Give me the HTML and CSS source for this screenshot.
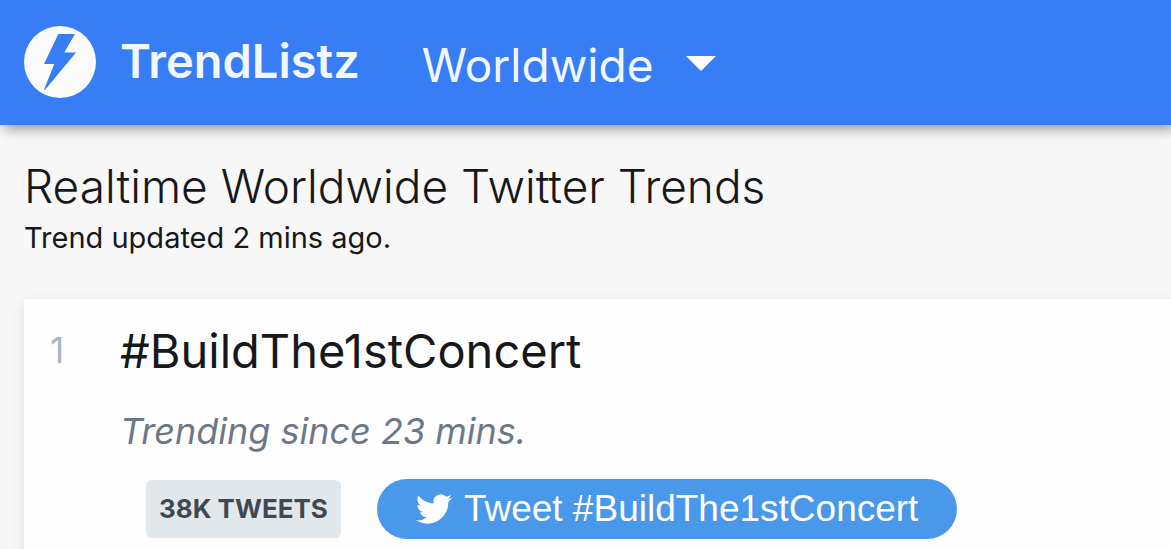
FILE: index.html
```html
<!DOCTYPE html>
<html lang="en">
<head>
    <meta charset="UTF-8">
    <meta name="viewport" content="width=device-width, initial-scale=1.0">
    <title>TrendListz</title>
    <link rel="stylesheet" href="styles.css">
</head>
<body>
    <header class="navbar">
        <a class="brand" href="#">
            <svg class="logo" viewBox="0 0 72 72" aria-hidden="true">
                <circle cx="36" cy="36" r="36" fill="#fafafa"/>
                <path d="M34.400 8H51L40.300 26.600H52L21.300 63.500Q20 65 20.300 63L30.300 38H20Z" fill="#377df6"/>
            </svg>
            <span>TrendListz</span>
        </a>
        <div class="location">
            <select class="location-select" aria-label="Location">
                <option>Worldwide</option>
            </select>
            <svg class="caret" viewBox="0 0 30 15" aria-hidden="true">
                <path d="M0 0H30L15 15Z" fill="#fff"/>
            </svg>
        </div>
    </header>
    <main class="content">
        <h1>Realtime Worldwide Twitter Trends</h1>
        <p class="updated">Trend updated 2 mins ago.</p>
        <ol class="trends">
            <li class="trend">
                <span class="rank">1</span>
                <div class="trend-body">
                    <h2>#BuildThe1stConcert</h2>
                    <p class="since">Trending since 23 mins.</p>
                    <div class="actions">
                        <span class="badge">38K TWEETS</span>
                        <a class="tweet" href="#">
                            <svg class="bird" viewBox="0 0 24 24" aria-hidden="true">
                                <path fill="#fff" d="M23.950 4.570a10 10 0 0 1-2.820.780 4.960 4.960 0 0 0 2.160-2.720c-.950.550-2 .950-3.130 1.180a4.920 4.920 0 0 0-8.380 4.480C7.690 8.090 4.070 6.130 1.640 3.160a4.900 4.900 0 0 0 1.520 6.570 4.900 4.900 0 0 1-2.230-.610v.060a4.920 4.920 0 0 0 3.950 4.830 5 5 0 0 1-2.210.080 4.940 4.940 0 0 0 4.600 3.420A9.870 9.870 0 0 1 0 19.540a14 14 0 0 0 7.550 2.210c9.050 0 14-7.500 14-13.980 0-.210 0-.420-.020-.630a9.940 9.940 0 0 0 2.460-2.550z"/>
                            </svg>
                            Tweet #BuildThe1stConcert
                        </a>
                    </div>
                </div>
            </li>
        </ol>
    </main>
</body>
</html>
```
FILE: styles.css
```css
* {
    box-sizing: border-box;
}
body {
    margin: 0;
    font-family: Inter, "Liberation Sans", sans-serif;
    background: #f7f7f7;
    color: #17181a;
}
h1, h2, p, ol {
    margin: 0;
    padding: 0;
}
.navbar {
    display: flex;
    align-items: center;
    gap: 62px;
    height: 125px;
    padding: 0 24px 2px;
    background: #377df6;
    box-shadow: 4px 4px 12px rgba(0, 0, 0, 0.4);
}
.brand {
    display: flex;
    align-items: center;
    gap: 24px;
    color: #f2f7ff;
    font-size: 47px;
    font-weight: 600;
    line-height: 72px;
    text-decoration: none;
}
.brand span {
    padding-bottom: 2px;
}
.logo {
    width: 72px;
    height: 72px;
}
.location {
    display: flex;
    align-items: center;
    padding-top: 6px;
}
.location-select {
    appearance: none;
    padding: 0 62px 0 0;
    margin-right: -30px;
    border: none;
    background: transparent;
    color: #f2f7ff;
    font-family: inherit;
    font-size: 46px;
    font-weight: 400;
}
.caret {
    width: 30px;
    height: 15px;
    margin-bottom: 2px;
    pointer-events: none;
}
.content {
    padding: 31px 0 0 24px;
}
h1 {
    font-size: 46px;
    font-weight: 300;
    line-height: 60px;
}
.updated {
    font-size: 29px;
    line-height: 44px;
}
.trends {
    margin-top: 39px;
    list-style: none;
}
.trend {
    display: flex;
    padding: 22px 0 32px 26px;
    background: #fefefe;
    box-shadow: 0 4px 12px rgba(0, 0, 0, 0.1);
}
.rank {
    width: 70px;
    color: #a9b7c0;
    font-size: 35px;
    font-weight: 400;
    line-height: 58px;
}
h2 {
    font-size: 47px;
    font-weight: 400;
    line-height: 60px;
}
.since {
    margin-top: 28px;
    color: #6c7885;
    font-size: 36px;
    font-style: italic;
    line-height: 44px;
}
.actions {
    display: flex;
    align-items: center;
    gap: 36px;
    margin-top: 26px;
    padding-left: 26px;
}
.badge {
    padding: 0 13px;
    border-radius: 6px;
    background: #e2e7eb;
    color: #414950;
    font-size: 26px;
    font-weight: 700;
    line-height: 58px;
}
.tweet {
    display: flex;
    align-items: center;
    gap: 12px;
    padding: 0 39px;
    border-radius: 30px;
    background: #4a98e9;
    color: #fff;
    font-family: "Liberation Sans", Arial, sans-serif;
    font-size: 37px;
    line-height: 60px;
    text-decoration: none;
}
.bird {
    width: 36px;
    height: 36px;
}
```
